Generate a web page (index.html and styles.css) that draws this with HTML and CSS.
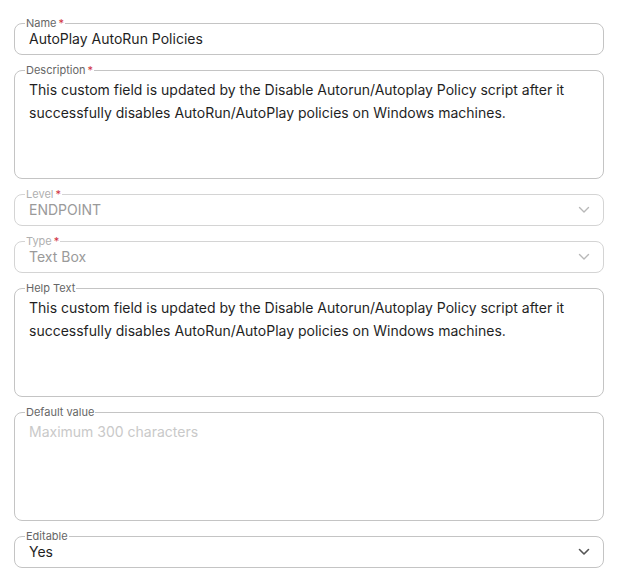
FILE: index.html
```html
<!DOCTYPE html>
<html lang="en">
<head>
  <meta charset="UTF-8">
  <title>Custom field</title>
  <link rel="stylesheet" href="styles.css">
</head>
<body>
  <div class="form">
    <fieldset class="field">
      <legend>Name<span class="req">*</span></legend>
      <div class="value">AutoPlay AutoRun Policies</div>
    </fieldset>

    <fieldset class="field">
      <legend>Description<span class="req">*</span></legend>
      <div class="value multi">This custom field is updated by the Disable Autorun/Autoplay Policy script after it successfully disables AutoRun/AutoPlay policies on Windows machines.</div>
    </fieldset>

    <fieldset class="field disabled">
      <legend>Level<span class="req">*</span></legend>
      <div class="value select">ENDPOINT
        <svg class="chev" width="12" height="8" viewBox="0 0 12 8"><path d="M1.5 1.5 6 6l4.5-4.5" fill="none" stroke="currentColor" stroke-width="1.4" stroke-linecap="round" stroke-linejoin="round"/></svg>
      </div>
    </fieldset>

    <fieldset class="field disabled">
      <legend>Type<span class="req">*</span></legend>
      <div class="value select">Text Box
        <svg class="chev" width="12" height="8" viewBox="0 0 12 8"><path d="M1.5 1.5 6 6l4.5-4.5" fill="none" stroke="currentColor" stroke-width="1.4" stroke-linecap="round" stroke-linejoin="round"/></svg>
      </div>
    </fieldset>

    <fieldset class="field">
      <legend>Help Text</legend>
      <div class="value multi">This custom field is updated by the Disable Autorun/Autoplay Policy script after it successfully disables AutoRun/AutoPlay policies on Windows machines.</div>
    </fieldset>

    <fieldset class="field">
      <legend>Default value</legend>
      <div class="value multi placeholder">Maximum 300 characters</div>
    </fieldset>

    <fieldset class="field">
      <legend>Editable</legend>
      <div class="value select">Yes
        <svg class="chev" width="12" height="8" viewBox="0 0 12 8"><path d="M1.5 1.5 6 6l4.5-4.5" fill="none" stroke="currentColor" stroke-width="1.6" stroke-linecap="round" stroke-linejoin="round"/></svg>
      </div>
    </fieldset>
  </div>
</body>
</html>
```

FILE: styles.css
```css
body {
  margin: 0;
  font-family: 'Inter', 'Liberation Sans', sans-serif;
  background: #ffffff;
  color: #1f1f1f;
}
.form {
  width: 590px;
  padding: 17px 15px 0 14px;
  display: flex;
  flex-direction: column;
  gap: 9px;
}
.field {
  margin: 0;
  padding: 0 14px 5px 14px;
  border: 1px solid #c4c4c4;
  border-radius: 8px;
  min-width: 0;
}
.field legend {
  font-size: 11px;
  line-height: 12px;
  height: 12px;
  color: #666;
  padding: 0 1px;
  margin-left: -4px;
}
.req {
  color: #d0313d;
  margin-left: 2px;
}
.value {
  font-size: 14px;
  line-height: 20px;
  height: 20px;
}
.multi {
  line-height: 23px;
  height: 95px;
  padding-top: 2px;
}
.placeholder {
  color: #c9c9c9;
}
.select {
  display: flex;
  align-items: center;
  justify-content: space-between;
}
.chev {
  color: #555;
  margin-right: -1px;
}
.disabled {
  border-color: #d4d4d4;
}
.disabled legend {
  color: #b0b0b0;
}
.disabled .value {
  color: #9a9a9a;
}
.disabled .chev {
  color: #b8b8b8;
}
```
